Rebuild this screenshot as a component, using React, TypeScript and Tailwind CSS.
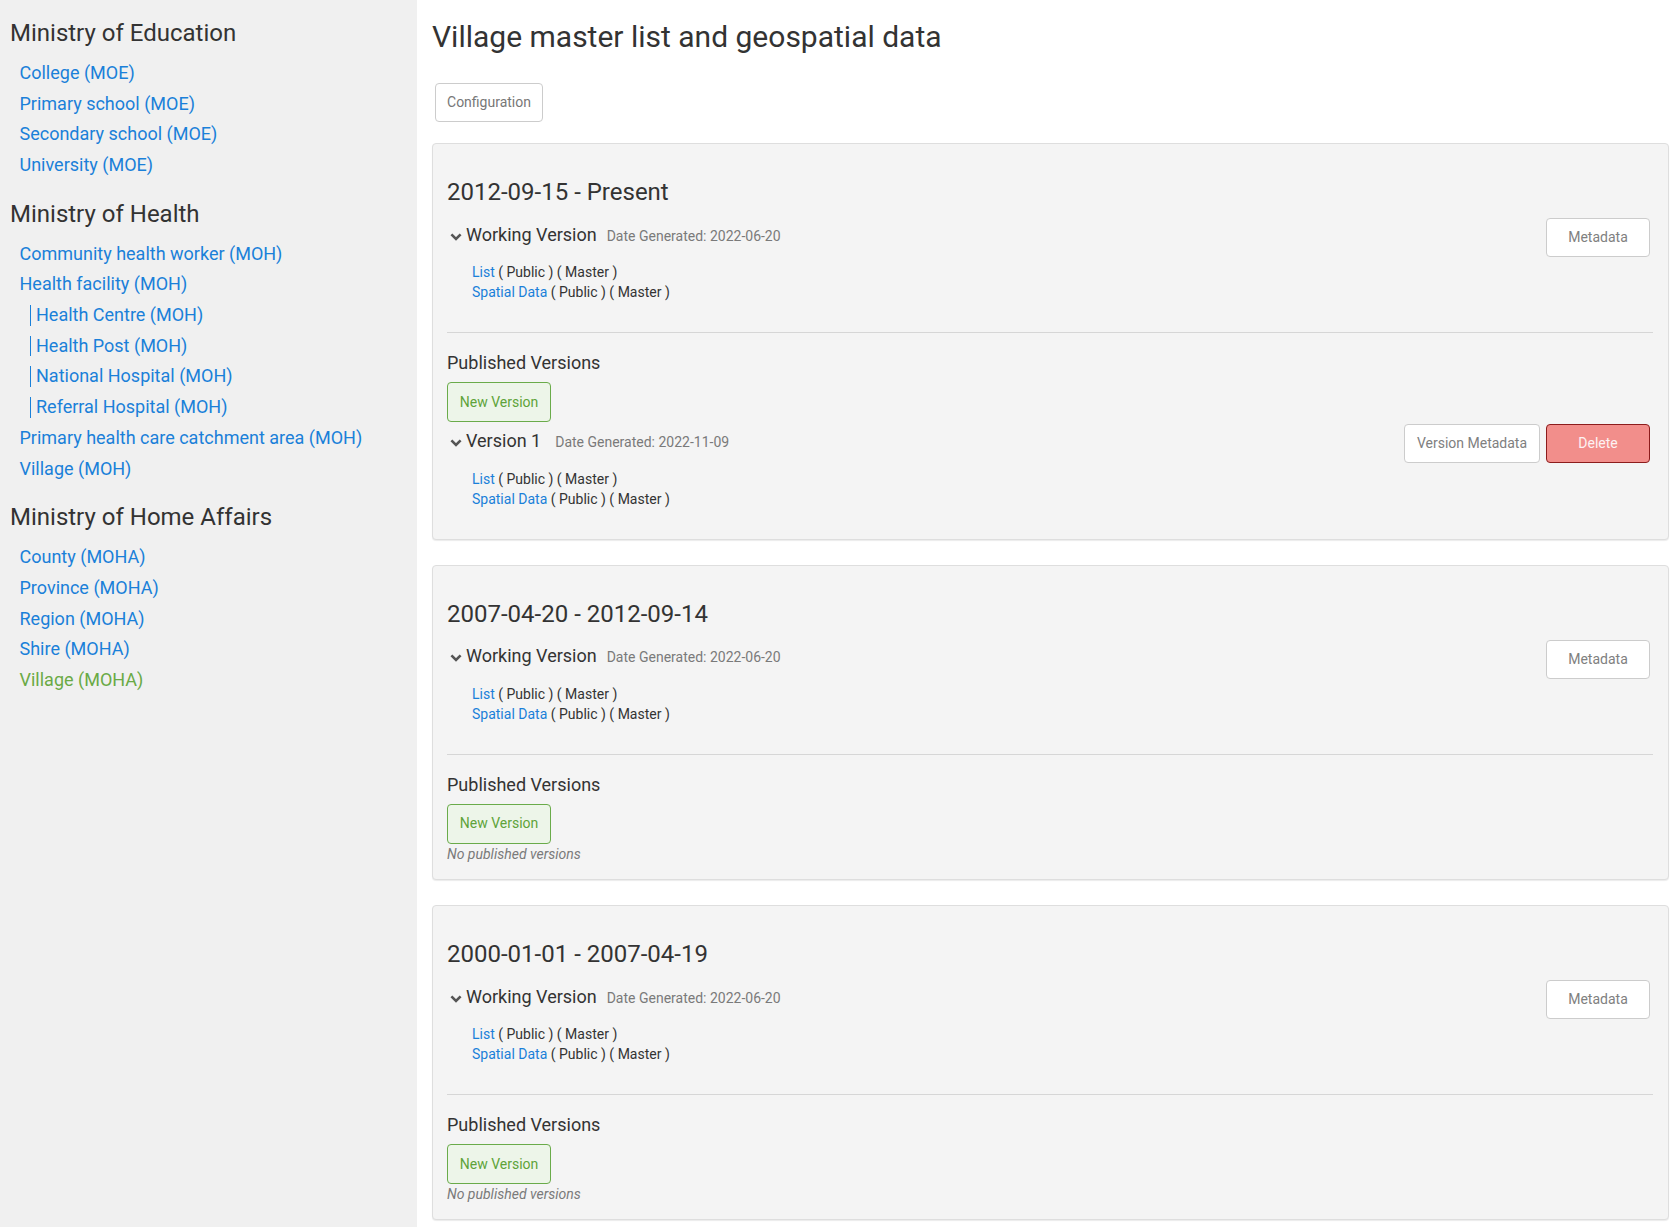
import React from "react";

type SideItem = { label: string; sub?: boolean; active?: boolean };
const groups: { title: string; items: SideItem[] }[] = [
  {
    title: "Ministry of Education",
    items: [
      { label: "College (MOE)" },
      { label: "Primary school (MOE)" },
      { label: "Secondary school (MOE)" },
      { label: "University (MOE)" },
    ],
  },
  {
    title: "Ministry of Health",
    items: [
      { label: "Community health worker (MOH)" },
      { label: "Health facility (MOH)" },
      { label: "Health Centre (MOH)", sub: true },
      { label: "Health Post (MOH)", sub: true },
      { label: "National Hospital (MOH)", sub: true },
      { label: "Referral Hospital (MOH)", sub: true },
      { label: "Primary health care catchment area (MOH)" },
      { label: "Village (MOH)" },
    ],
  },
  {
    title: "Ministry of Home Affairs",
    items: [
      { label: "County (MOHA)" },
      { label: "Province (MOHA)" },
      { label: "Region (MOHA)" },
      { label: "Shire (MOHA)" },
      { label: "Village (MOHA)", active: true },
    ],
  },
];

function Chevron() {
  return (
    <svg
      className="inline-block align-baseline ml-[3px] mr-[4px]"
      width="12"
      height="8"
      viewBox="0 0 12 8"
    >
      <path d="M1.4 1.4 L6 6 L10.6 1.4" fill="none" stroke="#555" strokeWidth="2.6" />
    </svg>
  );
}

function FileLines() {
  return (
    <div className="mt-[17.5px] pl-[25px] text-[14px] leading-[20px] text-[#333]">
      <div>
        <a className="text-[#1a80d9]">List</a> ( Public ) ( Master )
      </div>
      <div>
        <a className="text-[#1a80d9]">Spatial Data</a> ( Public ) ( Master )
      </div>
    </div>
  );
}

function Card({ title, version }: { title: string; version?: boolean }) {
  return (
    <div className="mb-[25px] rounded-[4px] border border-[#dedede] bg-[#f4f4f4] pt-[35px] pb-[15px] pl-[14px] pr-[15px] shadow-[0_1px_1px_rgba(0,0,0,0.08)]">
      <h2 className="text-[24px] leading-[26.4px] text-[#333]">{title}</h2>
      <div className="mt-[12.5px] flex items-start justify-between">
        <div className="pt-[6.85px]">
          <div className="text-[18px] leading-[20px] text-[#333]">
            <Chevron />
            Working Version
            <span className="ml-[10px] text-[14px] leading-none text-[#7a7a7a]">
              Date Generated: 2022-06-20
            </span>
          </div>
          <FileLines />
        </div>
        <button className="mr-[3px] h-[39px] w-[104px] rounded-[4px] border border-[#cccccc] bg-white text-[14px] text-[#808080]">
          Metadata
        </button>
      </div>
      <div className="mt-[30px] border-t border-[#d6d6d6]" />
      <div className="mt-[20px] text-[18px] leading-[20px] text-[#333]">Published Versions</div>
      <button className="mt-[9px] block h-[40px] w-[104px] rounded-[4px] border border-[#6aab4a] bg-[#edf5e9] text-[14px] text-[#5ea33a]">
        New Version
      </button>
      {version ? (
        <div className="mt-[2px] mb-[15px] flex items-start justify-between">
          <div className="pt-[6.85px]">
            <div className="text-[18px] leading-[20px] text-[#333]">
              <Chevron />
              Version 1
              <span className="ml-[14px] text-[14px] leading-none text-[#7a7a7a]">
                Date Generated: 2022-11-09
              </span>
            </div>
            <FileLines />
          </div>
          <div className="mr-[3px] flex gap-[6px]">
            <button className="h-[39px] w-[136px] rounded-[4px] border border-[#cccccc] bg-white text-[14px] text-[#808080]">
              Version Metadata
            </button>
            <button className="h-[39px] w-[104px] rounded-[4px] border border-[#8c1c1c] bg-[#f28e8b] text-[14px] text-[#fdf2f2]">
              Delete
            </button>
          </div>
        </div>
      ) : (
        <div className="text-[14px] leading-[20px] italic text-[#7a7a7a]">No published versions</div>
      )}
    </div>
  );
}

export default function App() {
  return (
    <div className="flex min-h-[1227px] w-full bg-white">
      <aside className="w-[417px] shrink-0 bg-[#f0f0f0] pl-[10px] font-[Roboto,sans-serif]">
        {groups.map((g) => (
          <div key={g.title}>
            <h3 className="mt-[20px] mb-[11.5px] text-[24px] leading-[26.4px] text-[#333]">{g.title}</h3>
            {g.items.map((it) => (
              <div key={it.label} className="py-[5px] pl-[9.5px] text-[18px] leading-[20.7px]">
                {it.sub ? (
                  <span className="ml-[10.5px] inline-block border-l border-[#1a80d9] pl-[5px] text-[#1a80d9]">
                    {it.label}
                  </span>
                ) : (
                  <a className={it.active ? "text-[#6aaa45]" : "text-[#1a80d9]"}>{it.label}</a>
                )}
              </div>
            ))}
          </div>
        ))}
      </aside>
      <main className="flex-1 pl-[15px] pr-[3px] font-[Roboto,sans-serif]">
        <h1 className="mt-[20px] text-[30px] leading-[33px] text-[#333]">
          Village master list and geospatial data
        </h1>
        <button className="mt-[30px] ml-[3px] block h-[39px] w-[108px] rounded-[4px] border border-[#cccccc] bg-white text-[14px] text-[#777]">
          Configuration
        </button>
        <div className="mt-[21px]">
          <Card title="2012-09-15 - Present" version />
          <Card title="2007-04-20 - 2012-09-14" />
          <Card title="2000-01-01 - 2007-04-19" />
        </div>
      </main>
    </div>
  );
}
